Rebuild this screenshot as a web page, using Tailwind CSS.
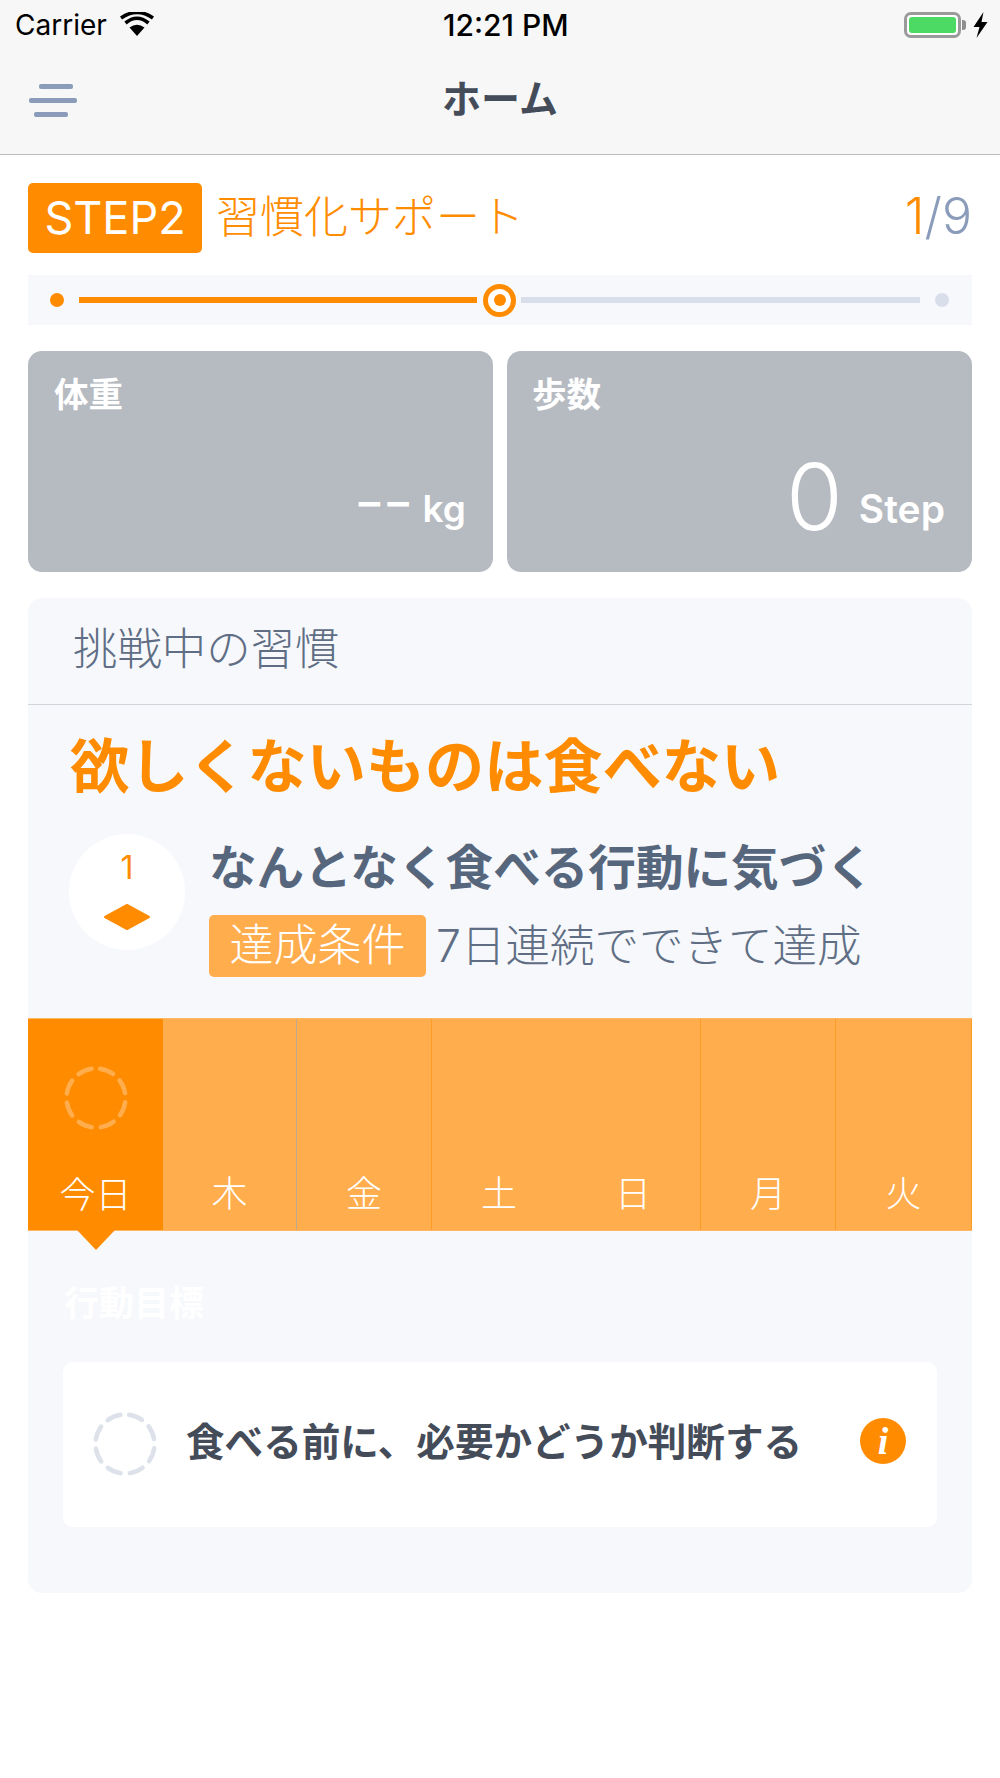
<!DOCTYPE html>
<html lang="ja">
<head>
<meta charset="utf-8">
<script src="https://cdn.jsdelivr.net/npm/@tailwindcss/browser@4"></script>
<title>ホーム</title>
</head>
<body class="bg-white font-['Inter','Noto_Sans_CJK_JP',sans-serif]">
<div class="w-[1000px] h-[1778px] flex flex-col overflow-hidden">
  <header class="h-[155px] shrink-0 bg-[#f7f7f7] border-b border-[#bcbcbc] flex flex-col">
    <div class="h-[50px] px-[15px] flex items-center justify-between relative">
      <div class="flex items-center gap-[13px]">
        <span class="text-[28px] leading-none text-black">Carrier</span>
        <svg width="34" height="24" viewBox="0 0 34 24" class="-mt-[2px]"><path d="M17 24 L9.5 15.5 Q17 10 24.5 15.5 Z" fill="#000"/><path d="M5.5 11 Q17 1.5 28.5 11" fill="none" stroke="#000" stroke-width="3.6"/><path d="M1 6 Q17 -5 33 6" fill="none" stroke="#000" stroke-width="3.6"/></svg>
      </div>
      <span class="absolute left-[443px] top-[9px] text-[30px] leading-[32px] font-medium text-black">12:21 PM</span>
      <div class="flex items-center gap-[7px] -mr-[3px]">
        <div class="flex items-center gap-[1px]">
          <div class="w-[57px] h-[26px] rounded-[7px] border-[3px] border-[#9a9a9a] p-[2px] bg-white"><div class="w-full h-full rounded-[3px] bg-[#4cd964]"></div></div>
          <div class="w-[4px] h-[10px] rounded-r-[3px] bg-[#8e8e8e]"></div>
        </div>
        <svg width="15" height="26" viewBox="0 0 14 26"><path d="M10 0 L0 15 H6 L3 26 L14 10 H8 Z" fill="#000"/></svg>
      </div>
    </div>
    <div class="flex-1 relative flex items-center justify-center pb-[8px]">
      <div class="absolute left-[29px] top-[34px] flex flex-col w-[48px] h-[35px]">
        <div class="ml-[10px] w-[34px] h-[5px] rounded-[2px] bg-[#8a9cb9]"></div>
        <div class="mt-[9px] w-[48px] h-[5px] rounded-[2px] bg-[#8a9cb9]"></div>
        <div class="mt-[9px] ml-[5px] w-[34px] h-[5px] rounded-[2px] bg-[#8a9cb9]"></div>
      </div>
      <h1 class="text-[39px] leading-none font-bold text-[#454c59]">ホーム</h1>
    </div>
  </header>

  <main class="px-[28px] flex flex-col">
    <div class="mt-[28px] h-[70px] flex items-center">
      <span class="h-[70px] w-[174px] rounded-[5px] bg-[#ff8c00] text-white text-[45px] leading-[70px] text-center">STEP2</span>
      <span class="ml-[14px] -mt-[2px] text-[44px] leading-none font-light text-[#ff8c00]">習慣化サポート</span>
      <span class="ml-auto -mt-[4px] text-[50px] leading-none font-light text-[#8a9cb9]"><span class="text-[#ff8c00]">1</span>/9</span>
    </div>

    <div class="mt-[22px] h-[50px] bg-[#f6f8fc] flex items-center px-[22px]">
      <div class="w-[14px] h-[14px] rounded-full bg-[#ff8c00]"></div>
      <div class="ml-[15px] w-[398px] h-[6px] bg-[#ff8c00]"></div>
      <div class="ml-[6px] w-[33px] h-[33px] rounded-full border-[5px] border-[#ff8c00] bg-white flex items-center justify-center"><div class="w-[12px] h-[12px] rounded-full bg-[#ff8c00]"></div></div>
      <div class="ml-[5px] w-[399px] h-[6px] bg-[#d8deea]"></div>
      <div class="ml-[15px] w-[14px] h-[14px] rounded-full bg-[#d8deea]"></div>
    </div>

    <div class="mt-[26px] grid grid-cols-2 gap-[14px]">
      <div class="h-[221px] rounded-[14px] bg-[#b6bac1] text-white flex flex-col justify-between pl-[26px] pr-[27px] pt-[23px] pb-[33px]">
        <span class="text-[34.5px] leading-[42px] font-bold">体重</span>
        <div class="flex items-baseline justify-end gap-[8px]">
          <span class="text-[42px] leading-[60px] font-bold tracking-[4px] font-['Noto_Sans_CJK_JP'] -translate-y-[2px]">−−</span>
          <span class="text-[37px] leading-[60px] font-semibold">kg</span>
        </div>
      </div>
      <div class="h-[221px] rounded-[14px] bg-[#b6bac1] text-white flex flex-col justify-between pl-[25px] pr-[27px] pt-[23px] pb-[33px]">
        <span class="text-[34.5px] leading-[42px] font-bold">歩数</span>
        <div class="flex items-baseline justify-end gap-[16px]">
          <span class="text-[92px] leading-[60px] font-light translate-y-[7px]">0</span>
          <span class="text-[39px] leading-[60px] font-semibold">Step</span>
        </div>
      </div>
    </div>

    <section class="mt-[26px] h-[995px] rounded-[14px] bg-[#f6f8fc] flex flex-col">
      <div class="h-[107px] shrink-0 border-b border-[#d2d6dc] flex items-center pl-[45px] pb-[4px]">
        <h2 class="text-[44.4px] leading-none font-light text-[#5f6e84]">挑戦中の習慣</h2>
      </div>
      <p class="mt-[27px] pl-[42px] text-[59.2px] leading-[70px] font-bold text-[#ff8c00]">欲しくないものは食べない</p>
      <div class="mt-[32px] pl-[41px] flex items-start">
        <div class="w-[116px] h-[116px] rounded-full bg-white flex flex-col items-center shrink-0">
          <span class="mt-[19px] text-[32px] leading-[30px] font-normal text-[#ff8c00]">1</span>
          <svg width="48" height="28" viewBox="0 0 48 28" class="mt-[20px]"><path d="M24 2 L46 14 L24 26 L2 14 Z" fill="#ff8c00" stroke="#ff8c00" stroke-width="2" stroke-linejoin="round"/></svg>
        </div>
        <div class="ml-[25px] flex flex-col">
          <p class="-ml-[1px] mt-[4px] text-[47.6px] leading-[60px] font-bold text-[#56667c] whitespace-nowrap">なんとなく食べる行動に気づく</p>
          <div class="mt-[17px] flex items-center -ml-[1px]">
            <span class="h-[62px] w-[217px] rounded-[5px] bg-[#ffad4d] text-white text-[44px] leading-[60px] font-light text-center">達成条件</span>
            <span class="ml-[10px] text-[44.5px] leading-none font-light text-[#5f6e84] whitespace-nowrap">7日連続でできて達成</span>
          </div>
        </div>
      </div>

      <div class="mt-[41px] h-[213px] flex relative text-white border-y border-[#ffb766]">
        <div class="w-[135px] bg-[#ff8c00] flex flex-col items-center relative">
          <svg width="64" height="64" viewBox="0 0 64 64" class="mt-[47px]"><circle cx="32" cy="32" r="29.5" fill="none" stroke="#ffad4d" stroke-width="4.5" stroke-linecap="round" stroke-dasharray="14 9.2" transform="rotate(-82 32 32)"/></svg>
          <span class="mt-[45px] text-[36px] leading-[40px] font-light">今日</span>
          <svg width="38" height="20" viewBox="0 0 38 20" class="absolute left-[49px] top-full"><path d="M0 0 H38 L19 20 Z" fill="#ff8c00"/></svg>
        </div>
        <div class="w-[134px] bg-[#ffad4d] border-r border-[#bfa98e] flex justify-center items-end pb-[16px]"><span class="text-[36px] leading-[40px] font-light">木</span></div>
        <div class="w-[135px] bg-[#ffad4d] border-r border-[#ff9a26] flex justify-center items-end pb-[16px]"><span class="text-[36px] leading-[40px] font-light">金</span></div>
        <div class="w-[134px] bg-[#ffad4d] flex justify-center items-end pb-[16px]"><span class="text-[36px] leading-[40px] font-light">土</span></div>
        <div class="w-[135px] bg-[#ffad4d] border-r border-[#ff9a26] flex justify-center items-end pb-[16px]"><span class="text-[36px] leading-[40px] font-light">日</span></div>
        <div class="w-[135px] bg-[#ffad4d] border-r border-[#ff9a26] flex justify-center items-end pb-[16px]"><span class="text-[36px] leading-[40px] font-light">月</span></div>
        <div class="flex-1 bg-[#ffad4d] border-r border-[#ff9a26] flex justify-center items-end pb-[16px]"><span class="text-[36px] leading-[40px] font-light">火</span></div>
      </div>

      <p class="mt-[49px] pl-[36px] text-[35px] leading-[46px] font-bold text-white">行動目標</p>
      <div class="mt-[36px] mx-[35px] h-[165px] rounded-[10px] bg-white flex items-center pl-[30px] pr-[31px]">
        <svg width="64" height="64" viewBox="0 0 64 64" class="shrink-0 -mt-[2px]"><circle cx="32" cy="32" r="29.5" fill="none" stroke="#dde2ea" stroke-width="4.5" stroke-linecap="round" stroke-dasharray="14 9.2" transform="rotate(-82 32 32)"/></svg>
        <span class="ml-[29px] -mt-[4px] text-[38.6px] leading-none font-bold text-[#454c59] whitespace-nowrap">食べる前に、必要かどうか判断する</span>
        <span class="ml-auto w-[46px] h-[46px] rounded-full bg-[#ff8c00] text-white flex items-center justify-center text-[38px] leading-none font-bold italic font-['Liberation_Serif'] -mt-[8px]">i</span>
      </div>
    </section>
  </main>
</div>
</body>
</html>
